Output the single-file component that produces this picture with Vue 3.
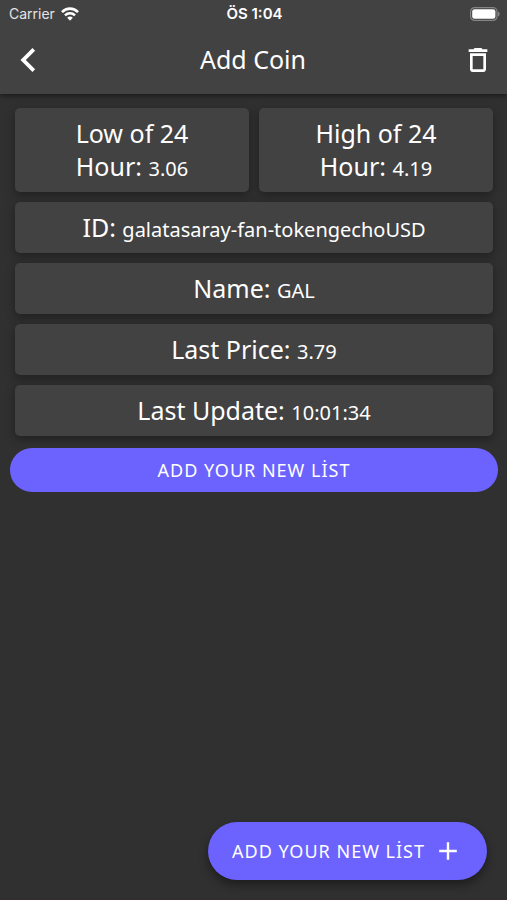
<script setup>
const ranges = [
  { label: 'Low of 24 Hour:', value: '3.06' },
  { label: 'High of 24 Hour:', value: '4.19' },
]
const details = [
  { label: 'ID:', value: 'galatasaray-fan-tokengechoUSD' },
  { label: 'Name:', value: 'GAL' },
  { label: 'Last Price:', value: '3.79' },
  { label: 'Last Update:', value: '10:01:34' },
]
</script>

<template>
  <div class="screen">
    <header class="header">
      <div class="status">
        <div class="carrier">
          <span>Carrier</span>
          <svg width="18" height="14" viewBox="0 0 18 14" fill="none" stroke="#fff" stroke-width="2.6" aria-hidden="true">
            <path d="M1 5.1C5.4.5 12.6.5 17 5.1" />
            <path d="M4 8.4c2.8-2.8 7.2-2.8 10 0" />
            <path d="M6.2 10.7c1.6-1.6 4-1.6 5.6 0L9 13.8z" fill="#fff" stroke="none" />
          </svg>
        </div>
        <span class="clock">ÖS 1:04</span>
        <div class="battery">
          <svg width="30" height="14" viewBox="0 0 30 14" aria-hidden="true">
            <rect x="0.6" y="0.6" width="26.4" height="12.8" rx="4" fill="none" stroke="#858585" stroke-width="1.2" />
            <rect x="2.2" y="2.2" width="23.2" height="9.6" rx="2.4" fill="#fff" />
            <path d="M28 4.6c2.2 1 2.2 3.8 0 4.8z" fill="#858585" />
          </svg>
        </div>
      </div>
      <div class="toolbar">
        <button class="icon" type="button" aria-label="Back">
          <svg width="28" height="28" viewBox="0 0 28 28" fill="none" stroke="#fff" stroke-width="3.8" aria-hidden="true">
            <path d="M19.8 3.4 9.2 14l10.6 10.6" />
          </svg>
        </button>
        <h1>Add Coin</h1>
        <button class="icon" type="button" aria-label="Delete">
          <svg width="32" height="32" viewBox="0 0 24 24" fill="#fff" aria-hidden="true">
            <path d="M6 19c0 1.1.9 2 2 2h8c1.1 0 2-.9 2-2V7H6v12zM8 9h8v10H8V9zm7.5-5-1-1h-5l-1 1H5v2h14V4z" />
          </svg>
        </button>
      </div>
    </header>

    <main class="content">
      <div class="pair">
        <section v-for="item in ranges" :key="item.label" class="card">
          {{ item.label }} <span class="value">{{ item.value }}</span>
        </section>
      </div>
      <section v-for="item in details" :key="item.label" class="card">
        {{ item.label }} <span class="value">{{ item.value }}</span>
      </section>
      <button class="wide" type="button">ADD YOUR NEW LİST</button>
    </main>

    <footer class="footer">
      <button class="fab" type="button">
        <span>ADD YOUR NEW LİST</span>
        <svg width="30" height="30" viewBox="0 0 30 30" fill="none" stroke="#fff" stroke-width="2.4" aria-hidden="true">
          <path d="M15 6.2v17.6M6.2 15h17.6" />
        </svg>
      </button>
    </footer>
  </div>
</template>

<style>
body {
  margin: 0;
  background: #303030;
}
</style>

<style scoped>
.screen {
  box-sizing: border-box;
  min-height: 100vh;
  display: flex;
  flex-direction: column;
  background: #303030;
  border-bottom: 1px solid #352a2f;
  color: #fff;
  font-family: "Noto Sans", sans-serif;
}
.header {
  padding-bottom: 2px;
  background: #424242;
  box-shadow: 0 2px 5px rgba(0, 0, 0, 0.45);
}
.status {
  display: grid;
  grid-template-columns: 1fr auto 1fr;
  align-items: center;
  height: 27px;
  padding: 0 7px 0 9px;
  font-family: Inter, sans-serif;
  font-size: 14px;
}
.carrier {
  display: flex;
  align-items: center;
  gap: 6px;
  color: #e4e4e4;
}
.clock {
  font-size: 15px;
  font-weight: 600;
}
.battery {
  display: flex;
  justify-content: flex-end;
}
.toolbar {
  display: flex;
  align-items: center;
  justify-content: space-between;
  height: 65px;
  padding: 0 9px 0 8px;
}
h1 {
  margin: 0;
  font-size: 25px;
  font-weight: 400;
  line-height: 33px;
}
button {
  border: 0;
  color: #fff;
  font-family: inherit;
  font-size: 18px;
  letter-spacing: 1px;
}
.icon {
  display: flex;
  align-items: center;
  justify-content: center;
  width: 40px;
  height: 40px;
  padding: 0;
  background: none;
}
.content {
  display: flex;
  flex-direction: column;
  gap: 10px;
  padding: 14px 9px 14px 10px;
}
.pair {
  display: grid;
  grid-template-columns: 1fr 1fr;
  gap: 10px;
  margin: 0 5px;
}
.card {
  margin: 0 5px;
  padding: 9px 32px;
  border-radius: 5px;
  background: #424242;
  box-shadow: 0 3px 10px rgba(0, 0, 0, 0.35);
  font-size: 25px;
  line-height: 33px;
  text-align: center;
}
.pair .card {
  margin: 0;
}
.value {
  font-size: 20px;
  line-height: 20px;
}
.wide {
  height: 44px;
  margin-top: 2px;
  border-radius: 22px;
  background: #6c63ff;
}
.footer {
  display: flex;
  justify-content: flex-end;
  margin-top: auto;
  padding: 0 20px 19px;
}
.fab {
  display: flex;
  align-items: center;
  gap: 8px;
  height: 58px;
  padding: 0 24px;
  border-radius: 29px;
  background: #6c63ff;
  box-shadow: 0 5px 10px rgba(0, 0, 0, 0.4);
}
</style>
